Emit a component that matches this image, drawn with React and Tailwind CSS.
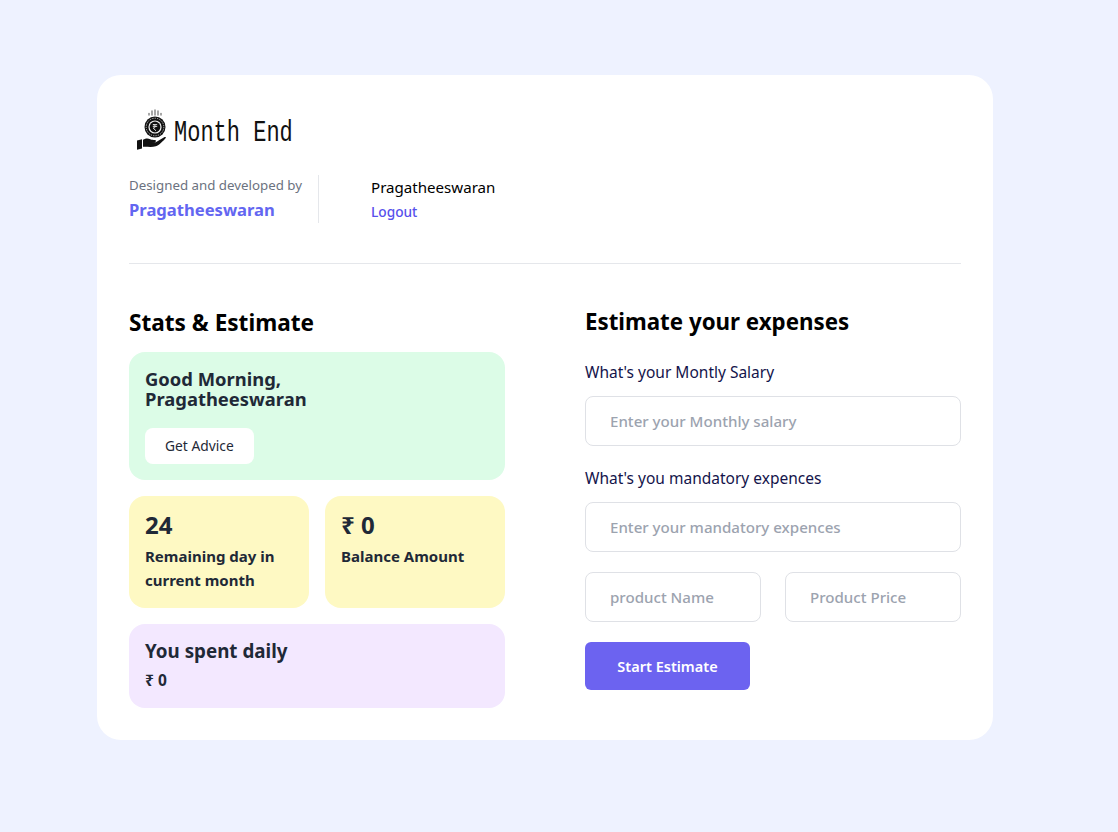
import React from "react";

function Logo() {
  return (
    <svg width="34" height="44" viewBox="0 0 34 44" className="shrink-0" aria-hidden="true">
      <g stroke="#8a8a8a" strokeWidth="1.5" strokeLinecap="round">
        <path d="M13 6V4.5" />
        <path d="M16 6V2" />
        <path d="M19 6V1" />
        <path d="M22 6V2" />
        <path d="M25 6V4.5" />
      </g>
      <circle cx="19" cy="18" r="10.5" fill="#111" />
      <circle cx="19" cy="18" r="8.8" fill="none" stroke="#ccc" strokeWidth="0.9" strokeDasharray="1.3 1.1" />
      <circle cx="19" cy="18" r="6.6" fill="#f2f2f2" />
      <circle cx="19" cy="18" r="5.4" fill="#111" />
      <path d="M16.8 15.6h4.4M16.8 17.4h4.4M17.2 15.6c2.7 0 2.7 3.5 0 3.5l2.8 2.7" fill="none" stroke="#eee" strokeWidth="0.9" />
      <path
        d="M1 31.5l5-1.2v9.2l-5 1.2z M7 30.8c3-1.6 5-1.6 7.2-.5 1.6.7 3 .7 4.6.7 1.6 0 1.7 2-.2 2.2l-4 .3 5.2-.2 8.8-5.2c.9-.4 1.6.2 1.1.8-2.6 3-6.4 7-9.9 8.3-3.4 1.2-8.2.4-12.8.6z"
        fill="#111"
      />
    </svg>
  );
}

function Field({ placeholder, className = "" }) {
  return (
    <input
      placeholder={placeholder}
      className={`h-[50px] w-full min-w-0 rounded-lg border border-[#dfe1e6] bg-white px-6 text-[15.1px] font-medium text-gray-800 outline-none placeholder:text-[#9ca3af] ${className}`}
    />
  );
}

export default function App() {
  return (
    <div className="flex min-h-[832px] items-start bg-[#eef2ff] pl-[97px] pt-[75px] font-['Noto_Sans','Open_Sans',sans-serif]">
      <div className="w-[896px] rounded-[24px] bg-white p-8">
        <div className="flex h-[48px] items-center gap-[4px] pl-[7px]">
          <Logo />
          <span className="mt-[8px] inline-block origin-center scale-y-[1.3] font-['Liberation_Mono',monospace] text-[22px] leading-none text-[#111]">Month End</span>
        </div>

        <div className="mt-[20px] flex">
          <div className="h-[48px] w-[190px] border-r border-[#e5e7eb]">
            <p className="text-[13.3px] leading-[20px] text-[#6b7280]">Designed and developed by</p>
            <p className="mt-[3px] text-[16.6px] font-bold leading-[24px] text-[#6366f1]">Pragatheeswaran</p>
          </div>
          <div className="pl-[52px]">
            <p className="pt-[2px] text-[15.1px] leading-[20px] text-black">Pragatheeswaran</p>
            <button className="mt-[5px] block text-[13.7px] font-medium leading-[20px] text-[#5750ec]">Logout</button>
          </div>
        </div>

        <div className="mt-[40px] border-t border-[#e5e7eb]" />

        <div className="mt-[41px] flex gap-[80px]">
          <section className="w-[376px]">
            <h2 className="text-[22.6px] font-bold leading-[36px] text-black">Stats &amp; Estimate</h2>
            <div className="mt-[11px] flex flex-col gap-4">
              <div className="h-[128px] rounded-2xl bg-[#dcfce7] p-4">
                <h3 className="w-[220px] pt-[1px] text-[18.4px] font-bold leading-[20px] text-[#1f2937]">Good Morning, Pragatheeswaran</h3>
                <button className="mt-[19px] h-[36px] rounded-lg bg-white px-5 text-[13.8px] text-[#1f2937]">Get Advice</button>
              </div>
              <div className="flex gap-4">
                <div className="h-[112px] w-[180px] rounded-2xl bg-[#fef9c3] p-4">
                  <p className="text-[24px] font-bold leading-[26px] text-[#1f2937]">24</p>
                  <p className="mt-[6px] text-[15px] font-bold leading-[24px] text-[#1f2937]">Remaining day in current month</p>
                </div>
                <div className="h-[112px] w-[180px] rounded-2xl bg-[#fef9c3] p-4">
                  <p className="text-[24px] font-bold leading-[26px] text-[#1f2937]">₹ 0</p>
                  <p className="mt-[6px] text-[15px] font-bold leading-[24px] text-[#1f2937]">Balance Amount</p>
                </div>
              </div>
              <div className="h-[84px] rounded-2xl bg-[#f3e8ff] p-4">
                <p className="text-[18.8px] font-bold leading-[22px] text-[#1f2937]">You spent daily</p>
                <p className="mt-[8px] text-[15.5px] font-bold leading-[20px] text-[#1f2937]">₹ 0</p>
              </div>
            </div>
          </section>

          <section className="w-[376px]">
            <h2 className="text-[22.3px] font-bold leading-[34px] text-black">Estimate your expenses</h2>
            <label className="mt-[21px] block text-[15.5px] leading-[24px] text-[#14144b]">What's your Montly Salary</label>
            <Field placeholder="Enter your Monthly salary" className="mt-[12px]" />
            <label className="mt-[20px] block text-[15.5px] leading-[24px] text-[#14144b]">What's you mandatory expences</label>
            <Field placeholder="Enter your mandatory expences" className="mt-[12px]" />
            <div className="mt-[20px] flex gap-6">
              <Field placeholder="product Name" />
              <Field placeholder="Product Price" />
            </div>
            <button className="mt-[20px] h-[48px] w-[165px] rounded-md bg-[#6c63f0] pt-[1px] text-[14.5px] font-semibold text-white">Start Estimate</button>
          </section>
        </div>
      </div>
    </div>
  );
}
